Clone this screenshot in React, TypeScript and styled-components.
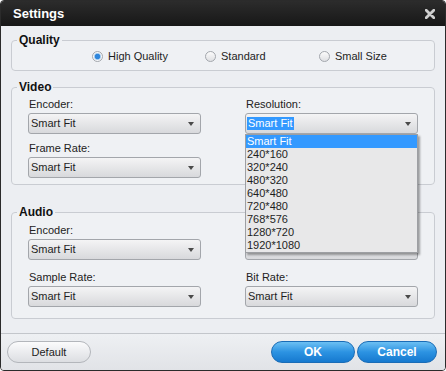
import styled, { createGlobalStyle } from 'styled-components'

const GlobalStyle = createGlobalStyle`
    html, body {
        margin: 0;
        padding: 0;
        background: #ffffff;
    }
    body {
        font-family: "Liberation Sans", Arial, sans-serif;
        font-size: 11px;
        color: #1e1e1e;
    }
`

const Window = styled.div`
    width: 446px;
    height: 371px;
    box-sizing: border-box;
    display: flex;
    flex-direction: column;
    background: #eceef2;
    border: 1px solid #2b2b2b;
    border-radius: 4px;
    overflow: hidden;
`

const TitleBar = styled.div`
    height: 25px;
    flex: none;
    display: flex;
    align-items: center;
    justify-content: space-between;
    padding: 0 10px 0 12px;
    background: linear-gradient(#2c2c2c, #171717);
    color: #ffffff;
    font-size: 13px;
    font-weight: bold;
`

const CloseButton = styled.button`
    width: 10px;
    height: 10px;
    padding: 0;
    border: 0;
    background: none;
    display: flex;
    cursor: pointer;
`

const Content = styled.div`
    flex: 1;
    display: flex;
    flex-direction: column;
    padding: 7px 10px 0;
`

const Group = styled.fieldset<{ $gap?: number }>`
    margin: ${(p) => p.$gap ?? 0}px 0 0;
    padding: 0;
    min-width: 0;
    border: 1px solid #c9ccd2;
    border-radius: 4px;
    background: #eff1f4;
`

const Legend = styled.legend`
    margin-left: 5px;
    padding: 0 2px;
    font-size: 12px;
    font-weight: bold;
    line-height: 14px;
    color: #111111;
`

const RadioRow = styled.div`
    display: flex;
    padding: 2px 0 7px 80px;
`

const RadioItem = styled.label<{ $width?: number }>`
    width: ${(p) => (p.$width ? `${p.$width}px` : 'auto')};
    display: flex;
    align-items: center;
    gap: 5px;
    line-height: 14px;
    cursor: pointer;
`

const RadioDot = styled.span<{ $checked?: boolean }>`
    width: 11px;
    height: 11px;
    box-sizing: border-box;
    border-radius: 50%;
    border: 1px solid #a3a7ad;
    background: ${(p) =>
        p.$checked
            ? 'radial-gradient(circle, #2f86dc 0 2.4px, #9fc9ef 3px, #f6f7f9 4px)'
            : 'linear-gradient(#fbfbfb, #dfe0e3)'};
`

const FieldGrid = styled.div<{ $rowGap: number; $padTop: number; $padBottom: number }>`
    display: grid;
    grid-template-columns: 173px 173px;
    column-gap: 44px;
    row-gap: ${(p) => p.$rowGap}px;
    padding: ${(p) => p.$padTop}px 15px ${(p) => p.$padBottom}px 16px;
`

const Field = styled.div`
    position: relative;
    display: flex;
    flex-direction: column;
    gap: 2px;
`

// the label under the open list is covered in the picture
const FieldLabel = styled.span<{ $covered?: boolean }>`
    padding-left: 1px;
    line-height: 14px;
    color: #222222;
    visibility: ${(p) => (p.$covered ? 'hidden' : 'visible')};
`

const SelectBox = styled.div`
    position: relative;
    height: 21px;
    box-sizing: border-box;
    display: flex;
    align-items: center;
    justify-content: space-between;
    padding: 0 6px 0 1px;
    border: 1px solid #a3a6ab;
    border-radius: 3px;
    background: linear-gradient(#f4f4f5, #d8d9dc);
`

const SelectValue = styled.span<{ $selected?: boolean }>`
    padding: 0 1px;
    line-height: 13px;
    background: ${(p) => (p.$selected ? '#3399ff' : 'transparent')};
    color: ${(p) => (p.$selected ? '#ffffff' : '#1e1e1e')};
`

const Arrow = styled.span`
    width: 0;
    height: 0;
    border-left: 3.5px solid transparent;
    border-right: 3.5px solid transparent;
    border-top: 4px solid #4a4a4a;
`

const DropList = styled.ul`
    position: absolute;
    top: 100%;
    left: 0;
    z-index: 10;
    width: 173px;
    box-sizing: border-box;
    margin: 0;
    padding: 0;
    list-style: none;
    border: 1px solid #9d9fa3;
    background: #e8e8e9;
    box-shadow: 2px 2px 2px rgba(0, 0, 0, 0.35);
`

const DropItem = styled.li<{ $active?: boolean }>`
    padding-left: 1px;
    line-height: 13px;
    background: ${(p) => (p.$active ? '#3399ff' : 'transparent')};
    color: ${(p) => (p.$active ? '#ffffff' : '#1e1e1e')};
`

const Footer = styled.div`
    height: 37px;
    flex: none;
    box-sizing: border-box;
    display: flex;
    align-items: flex-start;
    padding: 7px 8px 0 6px;
    border-top: 1px solid #c3c6cb;
    background: linear-gradient(#eef0f3, #e1e3e7);
`

const PillButton = styled.button<{ $primary?: boolean; $width: number }>`
    width: ${(p) => p.$width}px;
    height: 22px;
    padding: 0;
    border-radius: 11px;
    font-family: "Liberation Sans", Arial, sans-serif;
    font-size: ${(p) => (p.$primary ? '12px' : '11px')};
    font-weight: ${(p) => (p.$primary ? 'bold' : 'normal')};
    color: ${(p) => (p.$primary ? '#ffffff' : '#222222')};
    border: 1px solid ${(p) => (p.$primary ? '#1a6cb6' : '#b3b6bb')};
    background: ${(p) =>
        p.$primary
            ? 'linear-gradient(#6cc0f3, #2c93e2 50%, #1679cf)'
            : 'linear-gradient(#fbfbfc, #dcdee2)'};
    cursor: pointer;
`

const Spacer = styled.div`
    flex: 1;
`

const ButtonPair = styled.div`
    display: flex;
    gap: 2px;
`

const resolutions = [
    'Smart Fit',
    '240*160',
    '320*240',
    '480*320',
    '640*480',
    '720*480',
    '768*576',
    '1280*720',
    '1920*1080',
]

function Select({ value, selected }: { value: string; selected?: boolean }) {
    return (
        <SelectBox>
            <SelectValue $selected={selected}>{value}</SelectValue>
            <Arrow />
        </SelectBox>
    )
}

export default function App() {
    return (
        <>
            <GlobalStyle />
            <Window>
                <TitleBar>
                    <span>Settings</span>
                    <CloseButton aria-label="Close">
                        <svg width="10" height="10" viewBox="0 0 10 10">
                            <path
                                d="M1.2 1.2 L8.8 8.8 M8.8 1.2 L1.2 8.8"
                                stroke="#cfcfcf"
                                strokeWidth="2.8"
                                strokeLinecap="round"
                            />
                        </svg>
                    </CloseButton>
                </TitleBar>
                <Content>
                    <Group>
                        <Legend>Quality</Legend>
                        <RadioRow>
                            <RadioItem $width={113}>
                                <RadioDot $checked />
                                High Quality
                            </RadioItem>
                            <RadioItem $width={114}>
                                <RadioDot />
                                Standard
                            </RadioItem>
                            <RadioItem>
                                <RadioDot />
                                Small Size
                            </RadioItem>
                        </RadioRow>
                    </Group>

                    <Group $gap={9}>
                        <Legend>Video</Legend>
                        <FieldGrid $rowGap={7} $padTop={3} $padBottom={6}>
                            <Field>
                                <FieldLabel>Encoder:</FieldLabel>
                                <Select value="Smart Fit" />
                            </Field>
                            <Field>
                                <FieldLabel>Resolution:</FieldLabel>
                                <Select value="Smart Fit" selected />
                                <DropList>
                                    {resolutions.map((r, i) => (
                                        <DropItem key={r} $active={i === 0}>
                                            {r}
                                        </DropItem>
                                    ))}
                                </DropList>
                            </Field>
                            <Field>
                                <FieldLabel>Frame Rate:</FieldLabel>
                                <Select value="Smart Fit" />
                            </Field>
                        </FieldGrid>
                    </Group>

                    <Group $gap={20}>
                        <Legend>Audio</Legend>
                        <FieldGrid $rowGap={10} $padTop={4} $padBottom={11}>
                            <Field>
                                <FieldLabel>Encoder:</FieldLabel>
                                <Select value="Smart Fit" />
                            </Field>
                            <Field>
                                <FieldLabel $covered>Channel:</FieldLabel>
                                <Select value="Smart Fit" />
                            </Field>
                            <Field>
                                <FieldLabel>Sample Rate:</FieldLabel>
                                <Select value="Smart Fit" />
                            </Field>
                            <Field>
                                <FieldLabel>Bit Rate:</FieldLabel>
                                <Select value="Smart Fit" />
                            </Field>
                        </FieldGrid>
                    </Group>
                </Content>
                <Footer>
                    <PillButton $width={84}>Default</PillButton>
                    <Spacer />
                    <ButtonPair>
                        <PillButton $primary $width={84}>
                            OK
                        </PillButton>
                        <PillButton $primary $width={80}>
                            Cancel
                        </PillButton>
                    </ButtonPair>
                </Footer>
            </Window>
        </>
    )
}
